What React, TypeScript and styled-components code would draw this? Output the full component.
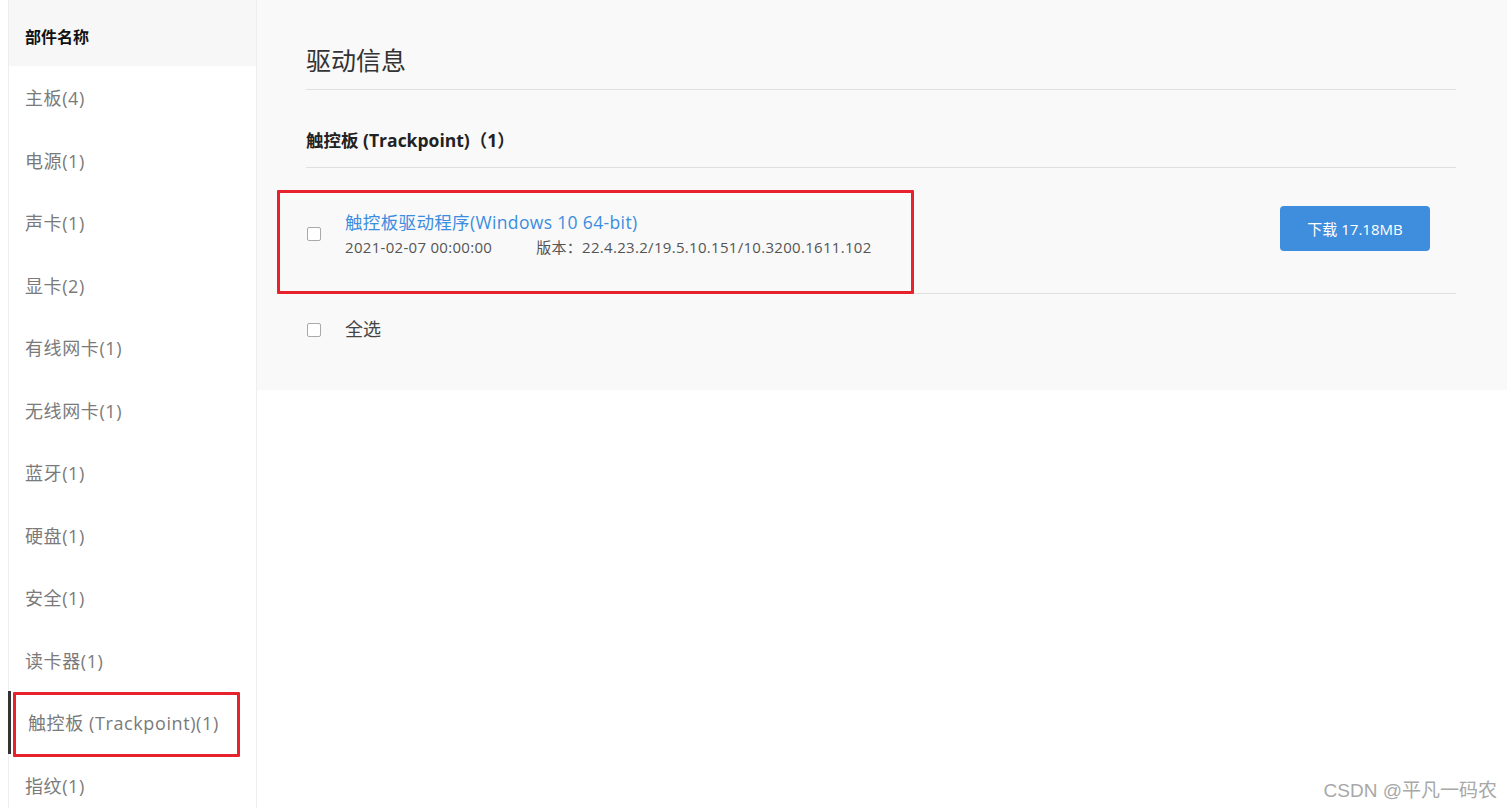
import React from "react";
import styled, { createGlobalStyle } from "styled-components";

const GlobalStyle = createGlobalStyle`
  body {
    margin: 0;
    background: #fff;
    font-family: "Open Sans", "Noto Sans CJK SC", sans-serif;
    color: #333;
  }
`;

const Page = styled.div`
  display: flex;
  align-items: flex-start;
  width: 1512px;
  height: 808px;
  overflow: hidden;
  position: relative;
`;

const Sidebar = styled.div`
  margin-left: 8px;
  width: 247px;
  min-height: 808px;
  border-left: 1px solid #eeeeee;
  border-right: 1px solid #eeeeee;
  flex-shrink: 0;
`;

const SideHeader = styled.div`
  height: 66px;
  box-sizing: border-box;
  padding: 25px 0 0 16px;
  line-height: 24px;
  font-size: 16px;
  font-weight: 700;
  color: #111;
  background: #f7f7f7;
`;

const SideItem = styled.div<{ $active?: boolean }>`
  position: relative;
  height: 62.5px;
  display: flex;
  align-items: center;
  box-sizing: border-box;
  padding-left: ${({ $active }) => ($active ? "17px" : "16px")};
  border-left: ${({ $active }) => ($active ? "3px solid #333" : "none")};
  margin-left: ${({ $active }) => ($active ? "-1px" : "0")};
  font-size: 18px;
  letter-spacing: 0.6px;
  color: #7a7a7a;
`;

const Mark = styled.div`
  position: absolute;
  border: 3px solid #e8222c;
  border-radius: 1px;
  box-sizing: border-box;
  pointer-events: none;
`;

const SideMark = styled(Mark)`
  left: 2px;
  top: 1px;
  width: 227px;
  height: 65px;
`;

const Main = styled.div`
  width: 1250px;
  height: 390px;
  box-sizing: border-box;
  padding: 0 51px 0 49px;
  background: #f9f9f9;
  flex-shrink: 0;
`;

const Title = styled.div`
  padding: 40px 0 9px;
  line-height: 40px;
  font-size: 25px;
  color: #333;
  border-bottom: 1px solid #e0e0e0;
`;

const Section = styled.div`
  padding: 37px 0 14px;
  line-height: 26px;
  font-size: 17.5px;
  font-weight: 700;
  color: #222;
  border-bottom: 1px solid #e0e0e0;
`;

const Row = styled.div`
  position: relative;
  display: flex;
  align-items: flex-start;
  padding: 38px 26px 34px 1px;
  border-bottom: 1px solid #e0e0e0;
`;

const RowMark = styled(Mark)`
  left: -29px;
  top: 22px;
  width: 637px;
  height: 104px;
`;

const Check = styled.span<{ $top: number }>`
  display: block;
  width: 14px;
  height: 14px;
  box-sizing: border-box;
  border: 1px solid #a9a9a9;
  border-radius: 2px;
  background: #fff;
  margin-top: ${({ $top }) => $top}px;
  flex-shrink: 0;
`;

const Info = styled.div`
  flex: 1;
  margin: 3px 0 0 24px;
`;

const DriverName = styled.a`
  display: block;
  line-height: 26px;
  font-size: 17.5px;
  letter-spacing: 0.35px;
  color: #3b8de0;
  text-decoration: none;
`;

const Meta = styled.div`
  display: flex;
  gap: 44px;
  line-height: 24px;
  font-size: 15px;
  letter-spacing: 0.3px;
  color: #555;
`;

const Download = styled.button`
  width: 150px;
  height: 45px;
  border: none;
  border-radius: 4px;
  background: #3f8ddd;
  color: #fff;
  font-family: inherit;
  font-size: 15px;
`;

const SelectAll = styled.div`
  display: flex;
  align-items: flex-start;
  padding: 23px 0 0 1px;
  line-height: 24px;
  font-size: 18px;
  color: #444;
`;

const SelectLabel = styled.span`
  margin-left: 24px;
`;

const Watermark = styled.div`
  position: absolute;
  right: 15px;
  bottom: 6px;
  font-size: 19px;
  color: #a8a8a8;
  font-family: "Liberation Sans", "Noto Sans CJK SC", sans-serif;
`;

const parts = [
  "主板(4)",
  "电源(1)",
  "声卡(1)",
  "显卡(2)",
  "有线网卡(1)",
  "无线网卡(1)",
  "蓝牙(1)",
  "硬盘(1)",
  "安全(1)",
  "读卡器(1)",
  "触控板 (Trackpoint)(1)",
  "指纹(1)",
];

export default function App() {
  return (
    <Page>
      <GlobalStyle />
      <Sidebar>
        <SideHeader>部件名称</SideHeader>
        {parts.map((p, i) => (
          <SideItem key={p} $active={i === 10}>
            {p}
            {i === 10 && <SideMark />}
          </SideItem>
        ))}
      </Sidebar>
      <Main>
        <Title>驱动信息</Title>
        <Section>触控板 (Trackpoint)（1）</Section>
        <Row>
          <Check $top={21} />
          <Info>
            <DriverName href="#">触控板驱动程序(Windows 10 64-bit)</DriverName>
            <Meta>
              <span>2021-02-07 00:00:00</span>
              <span>版本：22.4.23.2/19.5.10.151/10.3200.1611.102</span>
            </Meta>
          </Info>
          <Download>下载 17.18MB</Download>
          <RowMark />
        </Row>
        <SelectAll>
          <Check $top={6} />
          <SelectLabel>全选</SelectLabel>
        </SelectAll>
      </Main>
      <Watermark>CSDN @平凡一码农</Watermark>
    </Page>
  );
}
